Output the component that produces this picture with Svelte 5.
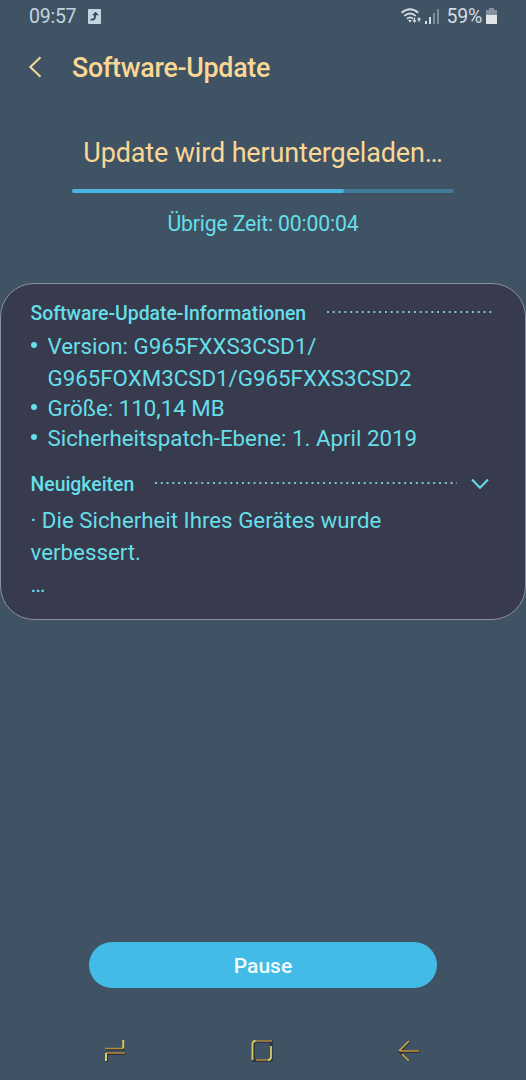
<script lang="ts">
  const percent = 71.2;
  const details = [
    ['Version: G965FXXS3CSD1/', 'G965FOXM3CSD1/G965FXXS3CSD2'],
    ['Größe: 110,14 MB'],
    ['Sicherheitspatch-Ebene: 1. April 2019'],
  ];
</script>

<div class="screen">
  <!-- Status bar -->
  <div class="status-bar">
    <span class="clock">09:57</span>
    <svg class="share-icon" width="13" height="15" viewBox="0 0 13 15">
      <rect width="13" height="15" rx="1" fill="#c3d3df" />
      <path d="M2.5 10.7H4.2Q7 10.7 7 7.5V5.5" fill="none" stroke="#34495a" stroke-width="1.8" />
      <path d="M4.2 6.2L7.5 2.8L10.8 6.2Z" fill="#34495a" />
    </svg>
    <span class="spacer"></span>
    <svg class="wifi-icon" width="21" height="16" viewBox="0 0 21 16">
      <g fill="none" stroke="#d3dce3" stroke-width="1.8">
        <path d="M.7 4.8Q9 -2.2 17.3 4.8" />
        <path d="M3.3 7.9Q9 3 14.7 7.9" />
        <path d="M6 10.8Q9 8 12 10.8" />
      </g>
      <path d="M7.2 12.4Q9 11.2 10.6 12.4L9 14.6Z" fill="#d3dce3" />
      <path d="M13.5 9.5V13M18 14V10" stroke="#d3dce3" stroke-width="1.2" />
      <path d="M11.4 12.3H15.6L13.5 15.1ZM15.9 11.8H20.1L18 9Z" fill="#d3dce3" />
    </svg>
    <svg class="signal-icon" width="14" height="15" viewBox="0 0 14 15">
      <path d="M0 12H2V15H0ZM4 8H6V15H4Z" fill="#d3dce3" />
      <path d="M8 4H10V15H8ZM12 0H14V15H12Z" fill="#7d8e9b" />
    </svg>
    <span class="battery-level">59%</span>
    <svg class="battery-icon" width="11" height="16" viewBox="0 0 11 16">
      <path d="M3 0H8V2H11V16H0V2H3Z" fill="#83929f" />
      <path d="M0 7H11V15Q11 16 10 16H1Q0 16 0 15Z" fill="#e1e5e8" />
    </svg>
  </div>

  <header class="header">
    <button class="btn-back" type="button" aria-label="Zurück">
      <svg width="14" height="22" viewBox="0 0 14 22">
        <path d="M12.5 1.2L2.3 11L12.5 20.8" fill="none" stroke="#f9d99b" stroke-width="2" />
      </svg>
    </button>
    <h1 class="title">Software-Update</h1>
  </header>

  <!-- Download progress -->
  <section class="download">
    <p class="download-title">Update wird heruntergeladen…</p>
    <div class="progress">
      <div class="progress-fill" style="width: {percent}%"></div>
    </div>
    <p class="time-left">Übrige Zeit: 00:00:04</p>
  </section>

  <!-- Update info -->
  <section class="card">
    <div class="card-heading">
      <h2 class="heading-info">Software-Update-Informationen</h2>
      <span class="dots dots-info"></span>
    </div>
    <ul class="details">
      {#each details as lines}
        <li class="detail">
          {#each lines as line}
            <span class="line">{line}</span>
          {/each}
        </li>
      {/each}
    </ul>

    <div class="card-heading news-heading">
      <h2 class="heading-news">Neuigkeiten</h2>
      <span class="dots dots-news"></span>
      <svg class="chevron" width="18" height="12" viewBox="0 0 18 12">
        <path d="M1 1.5L9 9.8L17 1.5" fill="none" stroke="#62dce8" stroke-width="2" />
      </svg>
    </div>
    <p class="news">· Die Sicherheit Ihres Gerätes wurde<br />verbessert.<br />…</p>
  </section>

  <button class="btn-pause" type="button">Pause</button>

  <!-- Navigation bar -->
  <nav class="nav-bar">
    <svg width="24" height="26" viewBox="0 0 24 26">
      <g fill="none" stroke="#26313a" stroke-width="2.2" transform="translate(.8 .9)">
        <path d="M2 10.5H20V2M22 15H3V23" />
      </g>
      <path d="M2 10.5H20M22 15H3" fill="none" stroke="#b48a38" stroke-width="1.6" />
      <path d="M20.3 2V10.5M3 15V23" stroke="#d6cc65" stroke-width="2" />
    </svg>
    <svg width="24" height="26" viewBox="0 0 24 26">
      <path d="M3 3H21V22H3Z" fill="none" stroke="#26313a" stroke-width="2.4" transform="translate(.5 .6)" />
      <path d="M3 3H22M6 22H20" stroke="#b98846" stroke-width="1.6" />
      <path d="M5.5 3Q2.5 3 2.5 6V22M21 8V19Q21 22 18 22" fill="none" stroke="#d6cc65" stroke-width="1.8" />
    </svg>
    <svg width="24" height="26" viewBox="0 0 24 26">
      <path d="M22 13H3M12 3L2 13L12 23" fill="none" stroke="#26313a" stroke-width="2.2" transform="translate(.7 .8)" />
      <path d="M22 13H3" stroke="#b98838" stroke-width="1.7" />
      <path d="M12 3L2 13M5 16L12 23" stroke="#cba64e" stroke-width="1.7" />
    </svg>
  </nav>
</div>

<style>
  :global(body) {
    background: #3f5364;
  }

  .screen {
    display: flex;
    flex-direction: column;
    width: 526px;
    height: 1080px;
    overflow: hidden;
    background: #3f5364;
    color: #66dfe9;
    font-family: Roboto, sans-serif;
    white-space: nowrap;
  }

  h1, h2, p, ul {
    margin: 0;
    padding: 0;
    font-weight: 400;
  }

  button {
    border: 0;
    padding: 0;
    font-family: inherit;
  }

  svg {
    display: block;
    flex: none;
  }

  /* Status bar */
  .status-bar {
    display: flex;
    align-items: center;
    height: 32px;
    padding: 0 29px;
    color: #c3d3df;
    font-size: 19.5px;
    letter-spacing: -0.25px;
  }

  .share-icon {
    margin-left: 12px;
  }

  .spacer {
    flex: 1;
  }

  .signal-icon {
    margin: 0 8px 0 3px;
  }

  .battery-level {
    color: #d3dce3;
  }

  .battery-icon {
    margin-left: 4px;
  }

  /* Header */
  .header {
    display: flex;
    align-items: center;
    height: 70px;
    padding-left: 28px;
  }

  .btn-back {
    width: 44px;
    background: none;
  }

  .title {
    padding-top: 2px;
    color: #fbd795;
    font-size: 26.8px;
    font-weight: 500;
    letter-spacing: -0.28px;
  }

  /* Download progress */
  .download {
    display: flex;
    flex-direction: column;
    align-items: center;
    height: 181px;
  }

  .download-title {
    margin-top: 34px;
    line-height: 34px;
    font-size: 27px;
    letter-spacing: -0.15px;
    color: #fbd795;
  }

  .progress {
    width: 382px;
    height: 4px;
    margin-top: 19px;
    border-radius: 2px;
    background: #427b97;
  }

  .progress-fill {
    height: 100%;
    border-radius: 2px;
    background: #4ab5e0;
  }

  .time-left {
    margin-top: 17px;
    line-height: 28px;
    font-size: 21.2px;
    letter-spacing: -0.15px;
  }

  /* Info card */
  .card {
    box-sizing: border-box;
    height: 337px;
    padding: 15px 33px 0 29.5px;
    border: 1px solid #89919e;
    border-radius: 34px;
    background: #383b4d;
  }

  .card-heading {
    display: flex;
    align-items: center;
    height: 28px;
  }

  .card-heading h2 {
    font-size: 19.4px;
    font-weight: 500;
  }

  .heading-info {
    width: 276px;
  }

  .heading-news {
    width: 103px;
  }

  .dots {
    height: 2px;
    margin-bottom: 3px;
    background: radial-gradient(circle at 1px 1px, #7fc7d5 0.9px, transparent 1.2px) 0 0 / 5.8px 2px repeat-x;
  }

  .dots-info {
    width: 166px;
    margin-left: 21px;
  }

  .dots-news {
    width: 302px;
    margin-left: 21px;
  }

  .chevron {
    margin-left: 14px;
  }

  .details {
    margin-top: 3px;
    list-style: none;
    font-size: 22.3px;
    line-height: 32px;
  }

  .detail {
    display: grid;
    grid-template-columns: 17px auto;
    margin-bottom: -2px;
  }

  .detail::before {
    content: '';
    width: 6px;
    height: 6px;
    margin-top: 12px;
    border-radius: 50%;
    background: #66dfe9;
  }

  .line {
    grid-column: 2;
  }

  .news-heading {
    margin-top: 18px;
  }

  .news {
    margin-top: 6px;
    font-size: 22.3px;
    line-height: 32px;
  }

  /* Bottom controls */
  .btn-pause {
    align-self: center;
    width: 348px;
    height: 46px;
    margin-top: 322px;
    padding-top: 2px;
    border-radius: 23px;
    background: #43bbe7;
    color: #f1fbff;
    font-size: 21px;
    font-weight: 500;
  }

  .nav-bar {
    display: flex;
    justify-content: space-between;
    margin-top: 50px;
    padding: 0 105px 0 103px;
  }
</style>
